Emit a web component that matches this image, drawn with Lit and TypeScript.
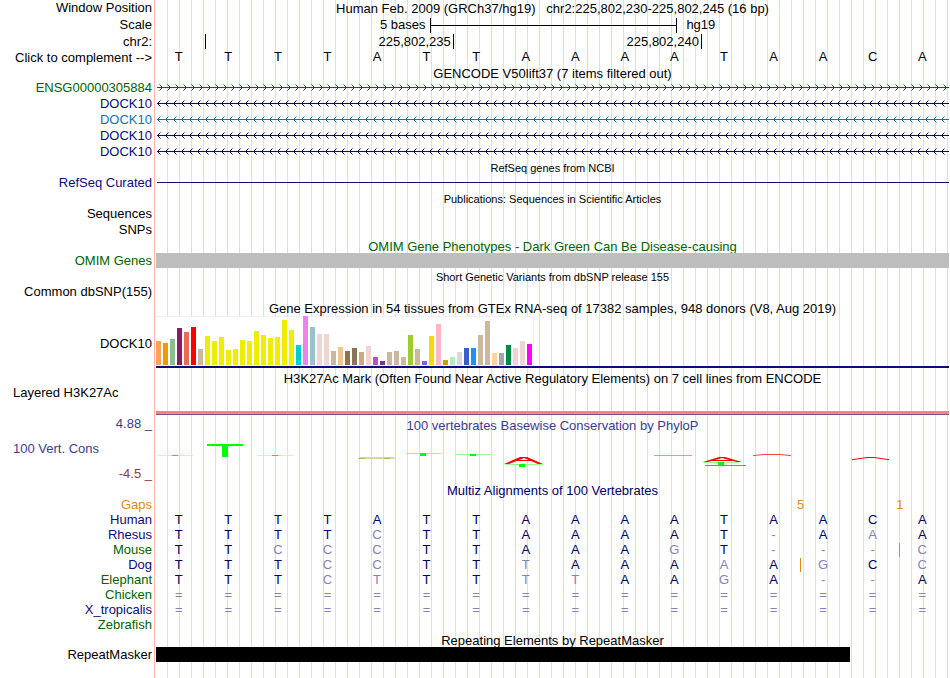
import { LitElement, html, css, svg, nothing } from "lit";
import { customElement, property } from "lit/decorators.js";
import { classMap } from "lit/directives/class-map.js";

const BASES = "TTTTATTAAAATAACA";

const tissues: [string, number][] = [
  ["#ffa54f", 24], ["#ee9a00", 22], ["#8fbc8f", 26], ["#8b1c62", 37], ["#ee6a50", 33], ["#ff0000", 38],
  ["#cdb79e", 16], ["#eeee00", 29], ["#eeee00", 24], ["#eeee00", 28], ["#eeee00", 15], ["#eeee00", 16],
  ["#eeee00", 25], ["#eeee00", 24], ["#eeee00", 34], ["#eeee00", 30], ["#eeee00", 27], ["#eeee00", 28],
  ["#eeee00", 45], ["#eeee00", 35], ["#00cdcd", 20], ["#ee82ee", 49], ["#9ac0cd", 38], ["#eed5d2", 31],
  ["#eed5d2", 31], ["#cdb79e", 14], ["#eec591", 18], ["#8b7355", 14], ["#8b7355", 17], ["#cdaa7d", 13],
  ["#eed5d2", 19], ["#b452cd", 8], ["#7a378b", 4], ["#cdb79e", 13], ["#cdb79e", 14], ["#cdb79e", 8],
  ["#9acd32", 30], ["#cdb79e", 16], ["#7a67ee", 4], ["#ffd700", 29], ["#ffb6c1", 41], ["#cd9b1d", 5],
  ["#b4eeb4", 8], ["#d9d9d9", 13], ["#3a5fcd", 17], ["#1e90ff", 17], ["#cdb79e", 30], ["#cdb79e", 44],
  ["#ffd39b", 12], ["#a6a6a6", 12], ["#008b45", 20], ["#eed5d2", 17], ["#eed5d2", 24], ["#ff00ff", 21],
];

interface Species {
  name: string;
  tone: string;
  seq: string;
  insertAfter?: number;
}

const species: Species[] = [
  { name: "Human", tone: "navy", seq: BASES },
  { name: "Rhesus", tone: "navy", seq: "TTTTCTTAAAAT-AAA" },
  { name: "Mouse", tone: "green", seq: "TTCCCTTAAAGT---C", insertAfter: 14 },
  { name: "Dog", tone: "navy", seq: "TTTCCTTTAAAAAGCC", insertAfter: 12 },
  { name: "Elephant", tone: "green", seq: "TTTCTTTTTAAGA--A" },
  { name: "Chicken", tone: "green", seq: "================" },
  { name: "X_tropicalis", tone: "navy", seq: "================" },
  { name: "Zebrafish", tone: "green", seq: "                " },
];

const gaps: Record<number, string> = { 12: "5", 14: "1" };

/** A thin transcript line with strand chevrons. */
@customElement("intron-line")
class IntronLine extends LitElement {
  @property() strand = "-";
  @property() color = "#0c0c78";

  static styles = css`
    :host { display: block; height: 16px; }
    svg { display: block; width: 100%; height: 16px; }
  `;

  render() {
    const forward = this.strand === "+";
    return html`<svg aria-hidden="true" shape-rendering="crispEdges">
      <defs>
        <pattern id="c" width="8" height="16" patternUnits="userSpaceOnUse">
          ${forward
            ? svg`<path fill=${this.color} d="M5 6h1v1h-1zM4 5h1v1h-1zM5 8h1v1h-1zM4 9h1v1h-1z"/>
                  <path fill=${this.color} fill-opacity=".5" d="M3 4h1v1h-1zM3 10h1v1h-1z"/>`
            : svg`<path fill=${this.color} d="M2 6h1v1h-1zM3 5h1v1h-1zM2 8h1v1h-1zM3 9h1v1h-1z"/>
                  <path fill=${this.color} fill-opacity=".5" d="M4 4h1v1h-1zM4 10h1v1h-1z"/>`}
        </pattern>
      </defs>
      <rect x="1" y="7" width="100%" height="1" fill=${this.color} />
      <rect width="100%" height="16" fill="url(#c)" />
    </svg>`;
  }
}

@customElement("app-root")
class AppRoot extends LitElement {
  static styles = css`
    :host {
      display: block;
      box-sizing: border-box;
      min-height: 100vh;
      overflow: hidden;
      background: #fff;
      color: #000;
      font: 13px/16px "Liberation Sans", Arial, sans-serif;
    }
    .browser {
      min-height: 100vh;
      background:
        linear-gradient(#ffb4b4, #ffb4b4) 154px 0 / 1px 100% no-repeat,
        repeating-linear-gradient(to right, transparent 0 11px, #dcdcf8 11px 12px) 156px 0 no-repeat;
    }
    .row {
      display: grid;
      grid-template-columns: 152px minmax(0, 1fr);
      column-gap: 4px;
      padding-right: 1px;
      line-height: 16px;
    }
    .label { text-align: right; white-space: nowrap; }
    .label.left { text-align: left; padding-left: 13px; }
    .title { margin: 1px 0 -1px; text-align: center; grid-column: 2; white-space: pre; }
    .small { font-size: 11px; }
    .navy { color: #0c0c78; }
    .green { color: #006400; }
    .blue { color: #1271b4; }
    .h14 { height: 14px; line-height: 14px; }
    .h15 { height: 15px; line-height: 15px; }
    .h18 { height: 18px; line-height: 18px; }
    button {
      border: 0;
      padding: 0;
      background: none;
      font: inherit;
      color: inherit;
      cursor: pointer;
    }

    .scale { display: flex; align-items: center; }
    .scale-text { flex: 0 0 34.5%; box-sizing: border-box; padding-right: 4px; text-align: right; }
    .scale-bar {
      flex: 0 0 31.25%;
      box-sizing: border-box;
      height: 15px;
      border: solid #000;
      border-width: 0 1px;
      background: linear-gradient(#000, #000) 0 7px / 100% 1px no-repeat;
    }
    .scale-name { padding-left: 9px; }

    .ruler { display: grid; grid-template-columns: 1fr 5fr 5fr 5fr; margin-right: -1px; }
    .tick {
      box-sizing: border-box;
      height: 15px;
      padding-right: 2px;
      border-right: 1px solid #000;
      text-align: right;
    }

    .bases {
      display: grid;
      grid-template-columns: repeat(16, 1fr);
      margin: 0 2px 0 -2px;
      text-align: center;
      line-height: 14px;
    }

    .thin { align-self: center; height: 1px; background: #0c0c78; margin-left: 1px; }
    .omim { background: #bebebe; }

    .expression { height: 54px; }
    .expression .label { line-height: 56px; }
    .chart { height: 50px; border-bottom: 2px solid #0c0c78; }
    .bars {
      display: flex;
      align-items: flex-end;
      gap: 2px;
      box-sizing: border-box;
      width: max-content;
      height: 50px;
      padding-right: 1px;
      background: #fff;
      border: solid #f0f0f0;
      border-width: 1px 1px 1px 0;
    }
    .bar { width: 5px; }

    .histone { height: 29px; align-items: end; }
    .histone .label { align-self: start; line-height: 14px; }
    .signal { height: 3px; background: #ff8080; border-bottom: 1px solid #705c80; }

    .phylop { padding-top: 1px; height: 66px; color: #3c3c8c; }
    .axis {
      display: flex;
      flex-direction: column;
      justify-content: space-between;
      height: 66px;
    }
    .low { color: #8c3c3c; }
    .logo-track { padding-top: 1px; }
    .logo { display: block; width: 100%; height: 49px; }

    .multiz { color: #00005f; }

    table {
      width: calc(100% - 3px);
      table-layout: fixed;
      border-collapse: collapse;
      border-spacing: 0;
      color: #00005f;
      line-height: 15px;
    }
    .names { width: 154px; }
    th { padding: 0 2px 0 0; font-weight: normal; text-align: right; }
    td { position: relative; height: 15px; padding: 0; text-align: center; }
    .diff { color: #8484b4; }
    .gaps { color: #e68a0c; }
    .gap { position: absolute; top: 0; right: -6px; }
    .insert { position: absolute; top: 1px; right: -3px; width: 1px; height: 14px; background: #e68a0c; }

    .repeat { width: 87.5%; background: #000; }
  `;

  private title(text: string, cls = "") {
    return html`<div class="row ${cls}"><div class="title">${text}</div></div>`;
  }

  private gene(name: string, tone: string, strand: string, color: string) {
    return html`<div class="row">
      <div class="label ${tone}">${name}</div>
      <intron-line strand=${strand} color=${color}></intron-line>
    </div>`;
  }

  private logo() {
    return svg`
      <g fill="#00ff00" shape-rendering="crispEdges">
        <path fill="#c8f8c8" d="M2 22h35v1h-35zM101 22h36v1h-36z"/>
        <path fill="#96ff96" d="M250 20h35v1h-35zM299 21h36v1h-36zM349 31h38v1h-38zM547 29h36v1h-36z"/>
        <path d="M16 22h6v1h-6zM116 22h6v1h-6zM51 11h36v2h-36zM66 12h6v12h-6z"/>
        <path d="M264 20h6v3h-6zM314 21h6v2h-6zM363 31h6v3h-6zM562 29h6v3h-6z"/>
      </g>
      <g shape-rendering="crispEdges">
        <path fill="#d4d49c" d="M203 24h35v1h-35z"/>
        <path fill="#d8d8a0" d="M202 25h38v1h-38z"/>
        <path fill="#b8b84c" d="M203 25h6v1h-6zM228 25h6v1h-6z"/>
        <path fill="#ff8c8c" d="M498 22h38v1h-38z"/>
        <path fill="#7878f0" d="M549 32h41v1h-41z"/>
      </g>
      <g fill="#ff0000">
        <path d="M348 31L364 24h7L387 31h-5L368 25L353 31z"/>
        <path d="M358 27h19v1h-19z"/>
        <path d="M547 29L563 24h6L586 29h-5L566 25L552 29z"/>
        <path d="M556 27h20v1h-20z"/>
      </g>
      <g fill="none" stroke="#ff0000">
        <path stroke-opacity=".75" d="M597 22.700L607 21.500H625L635 22.700"/>
        <path d="M696 26.700L711 24.500H718L733 26.700"/>
      </g>`;
  }

  render() {
    return html`<main class="browser">
      <div class="row">
        <div class="label">Window Position</div>
        <div class="title">Human Feb. 2009 (GRCh37/hg19)   chr2:225,802,230-225,802,245 (16 bp)</div>
      </div>
      <div class="row h18">
        <div class="label">Scale</div>
        <div class="scale">
          <span class="scale-text">5 bases</span><span class="scale-bar"></span><span class="scale-name">hg19</span>
        </div>
      </div>
      <div class="row">
        <div class="label">chr2:</div>
        <div class="ruler">
          <span class="tick"></span><span class="tick">225,802,235</span><span class="tick">225,802,240</span>
        </div>
      </div>
      <div class="row">
        <div class="label"><button type="button">Click to complement --&gt;</button></div>
        <div class="bases">${[...BASES].map((b) => html`<span>${b}</span>`)}</div>
      </div>

      ${this.title("GENCODE V50lift37 (7 items filtered out)", "h14")}
      ${this.gene("ENSG00000305884", "green", "+", "#006400")}
      ${this.gene("DOCK10", "navy", "-", "#0c0c78")}
      ${this.gene("DOCK10", "blue", "-", "#1271b4")}
      ${this.gene("DOCK10", "navy", "-", "#0c0c78")}
      ${this.gene("DOCK10", "navy", "-", "#0c0c78")}

      ${this.title("RefSeq genes from NCBI", "small h15")}
      <div class="row h15">
        <div class="label navy">RefSeq Curated</div>
        <div class="thin"></div>
      </div>

      ${this.title("Publications: Sequences in Scientific Articles", "small")}
      <div class="row"><div class="label">Sequences</div></div>
      <div class="row"><div class="label">SNPs</div></div>

      ${this.title("OMIM Gene Phenotypes - Dark Green Can Be Disease-causing", "green h15")}
      <div class="row h15">
        <div class="label green">OMIM Genes</div>
        <div class="omim"></div>
      </div>

      ${this.title("Short Genetic Variants from dbSNP release 155", "small")}
      <div class="row"><div class="label">Common dbSNP(155)</div></div>

      ${this.title("Gene Expression in 54 tissues from GTEx RNA-seq of 17382 samples, 948 donors (V8, Aug 2019)")}
      <div class="row expression">
        <div class="label">DOCK10</div>
        <div class="chart">
          <div class="bars">
            ${tissues.map(([color, h]) => html`<div class="bar" style="height:${h}px;background:${color}"></div>`)}
          </div>
        </div>
      </div>

      ${this.title("H3K27Ac Mark (Often Found Near Active Regulatory Elements) on 7 cell lines from ENCODE")}
      <div class="row histone">
        <div class="label left">Layered H3K27Ac</div>
        <div class="signal"></div>
      </div>

      <div class="row phylop">
        <div class="axis">
          <div class="label">4.88 _</div>
          <div class="label left">100 Vert. Cons</div>
          <div class="label low">-4.5 _</div>
        </div>
        <div class="logo-track">
          <div class="title">100 vertebrates Basewise Conservation by PhyloP</div>
          <svg class="logo" viewBox="0 0 793 49" preserveAspectRatio="none" aria-hidden="true">${this.logo()}</svg>
        </div>
      </div>

      ${this.title("Multiz Alignments of 100 Vertebrates", "multiz h15")}
      <table aria-label="Multiz Alignments of 100 Vertebrates">
        <colgroup><col class="names" />${[...BASES].map(() => html`<col />`)}</colgroup>
        <tbody>
          <tr class="gaps">
            <th scope="row">Gaps</th>
            ${[...BASES].map((_, i) => html`<td>${gaps[i] ? html`<span class="gap">${gaps[i]}</span>` : nothing}</td>`)}
          </tr>
          ${species.map(
            (s) => html`<tr>
              <th scope="row" class=${s.tone}>${s.name}</th>
              ${[...s.seq].map(
                (b, i) => html`<td class=${classMap({ diff: b !== BASES[i] })}>${b}${s.insertAfter === i
                  ? html`<span class="insert"></span>`
                  : nothing}</td>`
              )}
            </tr>`
          )}
        </tbody>
      </table>

      ${this.title("Repeating Elements by RepeatMasker", "h15")}
      <div class="row h15">
        <div class="label">RepeatMasker</div>
        <div class="repeat"></div>
      </div>
    </main>`;
  }
}
